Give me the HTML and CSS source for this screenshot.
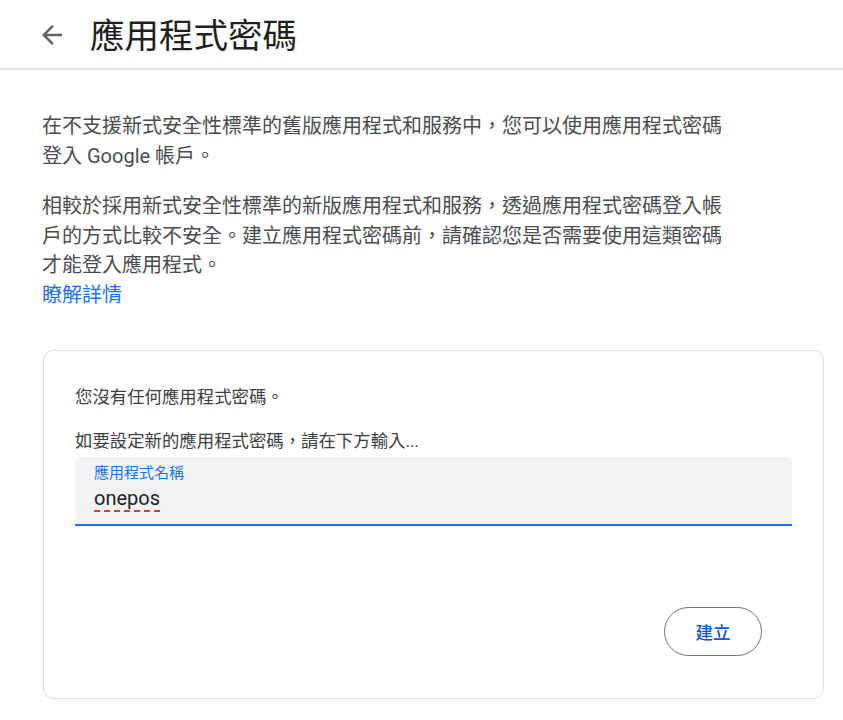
FILE: index.html
```html
<!DOCTYPE html>
<html lang="zh-Hant">
<head>
<meta charset="utf-8">
<title>應用程式密碼</title>
<link rel="stylesheet" href="styles.css">
</head>
<body>
<header class="topbar">
  <span class="back" aria-label="返回">
    <svg viewBox="0 0 24 24" width="30" height="30"><path fill="#5f6368" d="M20 11H7.83l5.59-5.59L12 4l-8 8 8 8 1.41-1.41L7.83 13H20v-2z"/></svg>
  </span>
  <h1 class="title">應用程式密碼</h1>
</header>
<main class="content">
  <p class="para">在不支援新式安全性標準的舊版應用程式和服務中，您可以使用應用程式密碼登入 Google 帳戶。</p>
  <p class="para">相較於採用新式安全性標準的新版應用程式和服務，透過應用程式密碼登入帳戶的方式比較不安全。建立應用程式密碼前，請確認您是否需要使用這類密碼才能登入應用程式。<br><a class="link" href="#">瞭解詳情</a></p>
  <section class="card">
    <p class="card-text">您沒有任何應用程式密碼。</p>
    <p class="card-text second">如要設定新的應用程式密碼，請在下方輸入...</p>
    <div class="field">
      <span class="field-label">應用程式名稱</span>
      <span class="field-value"><span class="spell">onepos</span></span>
    </div>
    <div class="actions">
      <button class="btn">建立</button>
    </div>
  </section>
</main>
</body>
</html>
```
FILE: styles.css
```css
html, body {
  margin: 0;
  padding: 0;
  background: #ffffff;
}
body {
  font-family: Roboto, "Noto Sans CJK TC", sans-serif;
  color: #3c4043;
}
.topbar {
  display: flex;
  align-items: center;
  height: 70px;
  border-bottom: 2px solid #e2e3e5;
  box-sizing: border-box;
  padding-left: 37px;
}
.back {
  display: flex;
  width: 30px;
  height: 30px;
  margin-top: 1px;
}
.title {
  margin: -2px 0 0 23px;
  font-size: 34.5px;
  font-weight: 400;
  line-height: 40px;
  color: #1f1f1f;
  font-family: "Noto Sans CJK TC", sans-serif;
}
.content {
  padding: 42px 0 0 42px;
}
.para {
  width: 690px;
  margin: 0 0 21px;
  font-size: 20px;
  line-height: 29.5px;
  color: #4a4d50;
}
.link {
  color: #1a73e8;
  text-decoration: none;
}
.card {
  margin: 40px 0 0 1px;
  width: 781px;
  box-sizing: border-box;
  border: 1.5px solid #e0e0e0;
  border-radius: 10px;
  padding: 34px 31px 42px 31px;
  display: flex;
  flex-direction: column;
}
.card-text {
  margin: 0;
  font-size: 17.4px;
  line-height: 24px;
  color: #3c4043;
}
.card-text.second {
  margin-top: 20px;
}
.field {
  margin-top: 4px;
  height: 69px;
  box-sizing: border-box;
  background: #f1f3f4;
  border-radius: 5px 5px 0 0;
  border-bottom: 2px solid #1a73e8;
  padding: 6px 20px 0 19px;
  display: flex;
  flex-direction: column;
}
.field-label {
  font-size: 15px;
  line-height: 20px;
  color: #1a73e8;
}
.field-value {
  font-size: 20px;
  line-height: 30px;
  color: #202124;
}
.spell {
  text-decoration: underline dashed #e53935;
  text-decoration-thickness: 1.5px;
  text-underline-offset: 5px;
}
.actions {
  display: flex;
  justify-content: flex-end;
  margin-top: 81px;
  padding-right: 30px;
}
.btn {
  width: 98px;
  height: 49px;
  border: 1.5px solid #747775;
  border-radius: 25px;
  background: #ffffff;
  color: #0b57d0;
  font-family: "Noto Sans CJK TC", sans-serif;
  font-size: 17.5px;
  font-weight: 500;
  padding: 0;
}
```
